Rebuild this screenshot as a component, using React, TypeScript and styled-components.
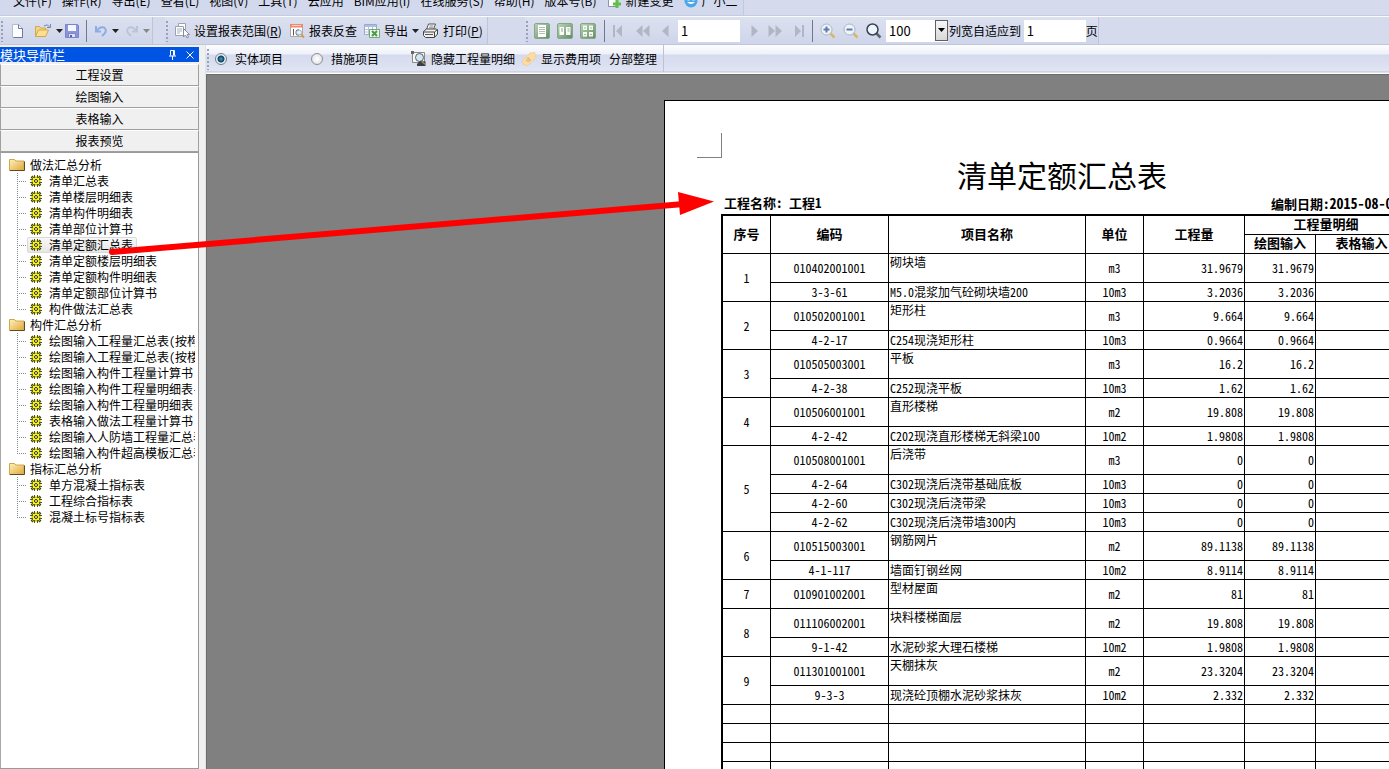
import React from "react";
import styled, { createGlobalStyle, css } from "styled-components";

const UI_FONT = '"Noto Sans CJK SC", "Liberation Sans", sans-serif';
const MONO_FONT = '"Noto Sans Mono CJK SC", "Noto Sans CJK SC", "Liberation Mono", monospace';

const GlobalStyle = createGlobalStyle`
  *, *::before, *::after { box-sizing: border-box; }
  body { margin: 0; overflow: hidden; background: #f0f0f0; font: 12px/16px ${UI_FONT}; color: #000; }
  button, input, select { font: inherit; color: inherit; margin: 0; padding: 0; border: 0; background: none; border-radius: 0; outline: 0; }
  ul { list-style: none; margin: 0; padding: 0; }
`;

const Window = styled.div`
  position: relative;
  display: flex;
  flex-direction: column;
  height: 100vh;
  overflow: hidden;
`;

const MenuBar = styled.nav`
  display: flex;
  flex: none;
  height: 30px;
  margin-top: -14px;
  background: #d5dbed;
  border-bottom: 1px solid #c6cbe0;
`;

const MenuGroup = styled.div`
  display: flex;
  align-items: center;
  gap: 10px;
  padding: 0 5px 0 13px;
  background: #d3d9ed;
  border-right: 1px solid #c3c9dd;
`;

const MenuItem = styled.button`
  display: flex;
  align-items: center;
  gap: 4px;
  white-space: nowrap;
`;

const ToolBar = styled.div`
  display: flex;
  flex: none;
  height: 29px;
  background: #d5dbed;
  border-top: 1px solid #fafbff;
  border-bottom: 1px solid #c1c6d6;
`;

const ToolGroup = styled.div<{ $gapAfter?: number }>`
  display: flex;
  align-items: center;
  background: linear-gradient(#dce1f0, #cfd5ea);
  border-right: 1px solid #bfc5d8;
  margin-right: ${(p) => p.$gapAfter ?? 0}px;
`;

const Grip = styled.span`
  flex: none;
  width: 9px;
  height: 22px;
  background: radial-gradient(circle at 2px 2px, #98a0ba 1px, transparent 1px) 0 0 / 9px 4px repeat-y;
`;

const ToolButton = styled.button<{ $width?: number; $center?: boolean }>`
  display: flex;
  flex: none;
  align-items: center;
  justify-content: ${(p) => (p.$center ? "center" : "flex-start")};
  gap: 4px;
  height: 22px;
  width: ${(p) => (p.$width ? `${p.$width}px` : "auto")};
  white-space: nowrap;
`;

const ToolLabel = styled.label`
  white-space: nowrap;
`;

const Separator = styled.span`
  flex: none;
  width: 1px;
  height: 22px;
  margin-right: 7px;
  background: #6f7890;
`;

const PageInput = styled.input`
  width: 62px;
  height: 22px;
  padding-left: 3px;
  background: #fff;
  font-size: 13px;
`;

const Combo = styled.span`
  display: grid;
  width: 62px;
  height: 22px;
  margin: 0 1px 0 4px;
  background: #fff;
  > * { grid-area: 1 / 1; }
`;

const ComboSelect = styled.select`
  appearance: none;
  width: 100%;
  padding-left: 3px;
  font-size: 13px;
`;

const ComboArrow = styled.span`
  display: grid;
  place-items: center;
  justify-self: end;
  width: 13px;
  height: 21px;
  border: 1px solid #606060;
  background: linear-gradient(#f6f6f6, #d8d8d8);
  pointer-events: none;
`;

const Body = styled.div`
  display: flex;
  flex: 1;
  min-height: 0;
`;

const Sidebar = styled.aside`
  display: flex;
  flex: none;
  flex-direction: column;
  width: 199px;
  padding-top: 2px;
`;

const PanelTitle = styled.header`
  display: flex;
  align-items: center;
  height: 15px;
  margin-bottom: 2px;
  background: #0054e3;
  color: #fff;
  font-size: 13px;
  line-height: 15px;
  > h2 { flex: 1; margin: 0; font: inherit; }
`;

const TitleButton = styled.button`
  display: grid;
  place-items: center;
  width: 18px;
  height: 15px;
`;

const NavButton = styled.button`
  height: 22px;
  border: 1px solid #a0a0a0;
  border-top-color: #fff;
  background: #f0f0f0;
  text-align: center;
`;

const Tree = styled.div`
  flex: 1;
  min-height: 0;
  padding: 4px 3px 0 0;
  overflow: hidden;
  border: 1px solid #9a9a9a;
  border-left-color: #a8a8a8;
  background: #fff;
  font-family: ${MONO_FONT};
`;

const TreeClip = styled.ul`
  overflow: hidden;
`;

const FolderButton = styled.button`
  display: flex;
  align-items: center;
  gap: 5px;
  height: 16px;
  padding-left: 8px;
  white-space: nowrap;
`;

const Leaf = styled.li`
  display: flex;
  height: 16px;
  padding-left: 16px;
`;

const Connector = styled.span<{ $last: boolean }>`
  flex: none;
  width: 10px;
  background:
    repeating-linear-gradient(#8a8a8a 0 1px, transparent 1px 2px) 0 0 / 1px ${(p) => (p.$last ? "50%" : "100%")} no-repeat,
    repeating-linear-gradient(90deg, #8a8a8a 0 1px, transparent 1px 2px) 0 8px / 10px 1px no-repeat;
`;

const LeafButton = styled.button<{ $active: boolean }>`
  display: flex;
  flex: none;
  align-items: center;
  gap: 7px;
  height: 16px;
  padding: 0 3px 0 2px;
  border: 1px solid transparent;
  border-radius: 2px;
  line-height: 14px;
  white-space: nowrap;
  ${(p) => p.$active && css`
    border-color: #d9d9d9;
    background: linear-gradient(#f8f8f8, #e6e6e6);
  `}
`;

const Splitter = styled.div`
  flex: none;
  width: 7px;
  background: #f0f0f0;
  border-right: 1px solid #e0e2ea;
`;

const Main = styled.main`
  display: flex;
  flex: 1;
  flex-direction: column;
  min-width: 0;
`;

const OptionBar = styled.div`
  display: flex;
  flex: none;
  height: 29px;
  padding-bottom: 1px;
  background: linear-gradient(#fcfdff 0, #eef1f9 9px, #d5daed 10px, #e0e4f3 26px, #c0c4d0 27px, #fff 28px);
`;

const OptionGroup = styled.div`
  display: flex;
  align-items: center;
  height: 27px;
  padding-right: 6px;
  border-right: 1px solid #bcc2d4;
`;

const RadioLabel = styled.label<{ $width: number }>`
  display: flex;
  align-items: center;
  gap: 8px;
  width: ${(p) => p.$width}px;
  white-space: nowrap;
`;

const Radio = styled.input`
  appearance: none;
  width: 12px;
  height: 12px;
  border: 1px solid #8a8f98;
  border-radius: 50%;
  background: radial-gradient(circle, #fff 0, #dfe1e6 6px);
  &:checked {
    border-color: #6b7f8e;
    background: radial-gradient(circle, #2b86ae 0 1px, #123c5a 3px, #eef3f6 4px);
  }
`;

const Viewer = styled.section`
  flex: 1;
  min-height: 0;
  padding: 25px 0 0 457px;
  overflow: hidden;
  border-left: 1px solid #6c6c6c;
  border-top: 1px solid #6c6c6c;
  background: #808080;
`;

const Sheet = styled.article`
  width: 797px;
  min-height: 1000px;
  padding: 32px 53px 0 56px;
  border: 1px solid #000;
  background: #fff;
  font-family: ${MONO_FONT};
`;

const CropMark = styled.div`
  width: 25px;
  height: 25px;
  margin-left: -24px;
  border: solid #808080;
  border-width: 0 1px 1px 0;
`;

const ReportTitle = styled.h1`
  margin: 0 0 4px;
  padding-right: 4px;
  font-size: 30px;
  font-weight: 300;
  line-height: 32px;
  text-align: center;
`;

const ReportInfo = styled.div`
  display: flex;
  justify-content: space-between;
  padding: 0 0 1px 3px;
  font-size: 13px;
  font-weight: 700;
  line-height: 18px;
  white-space: nowrap;
`;

const ReportDate = styled.span`
  width: 136px;
`;

const DateValue = styled.time`
  font-size: 14px;
`;

const Table = styled.table`
  width: 100%;
  table-layout: fixed;
  border: solid #000;
  border-width: 2px 0 0 2px;
  border-spacing: 0;
`;

const HeadCell = styled.th`
  height: 19px;
  padding: 0 0 2px;
  border: solid #000;
  border-width: 0 1px 1px 0;
  font-size: 13px;
  line-height: 16px;
`;

const Cell = styled.td<{ $align?: string; $top?: boolean; $tall?: boolean }>`
  height: ${(p) => (p.$tall ? 29 : 19)}px;
  padding: 0 1px;
  border: solid #000;
  border-width: 0 1px 1px 0;
  line-height: 16px;
  text-align: ${(p) => p.$align ?? "center"};
  vertical-align: ${(p) => (p.$top ? "top" : "middle")};
  white-space: nowrap;
`;

const ArrowOverlay = styled.svg`
  position: absolute;
  left: 0;
  top: 0;
  pointer-events: none;
`;

/* ---------- icons ---------- */

const Caret = ({ color = "#222" }: { color?: string }) => (
  <svg width="7" height="4" viewBox="0 0 7 4"><path d="M0 0h7L3.500 4z" fill={color} /></svg>
);

const NewIcon = () => (
  <svg width="16" height="16" viewBox="0 0 16 16">
    <path d="M3.500 1.500h6l4 4v9h-10z" fill="#fdfdff" stroke="#b4bdd0" />
    <path d="M9.500 1.500v4h4v9h-9" fill="none" stroke="#6c7a98" />
  </svg>
);

const OpenIcon = () => (
  <svg width="18" height="16" viewBox="0 0 18 16">
    <path d="M1.500 13.500v-10h4l1 1.500h5v3" fill="#f5d67e" stroke="#d0a850" />
    <path d="M1.500 13.500l3-6.500h10l-3 6.500z" fill="#ffe08a" stroke="#d0a850" />
    <path d="M10 3q3-2.500 5.500.5M16.500 1v3.500h-3.500" fill="none" stroke="#6f87b8" />
  </svg>
);

const SaveIcon = () => (
  <svg width="16" height="16" viewBox="0 0 16 16">
    <path d="M1.500 1.500h12l1 1v12h-13z" fill="#8d95da" stroke="#7a83cc" />
    <path d="M4 2h8v6H4z" fill="#f4f6ff" />
    <path d="M4.500 10.500h7v4h-7z" fill="#dfe3f8" stroke="#7a83cc" />
    <path d="M6 12h2v2H6z" fill="#5560a8" />
  </svg>
);

const UndoIcon = ({ color, flip }: { color: string; flip?: boolean }) => (
  <svg width="14" height="14" viewBox="0 0 14 14">
    <g transform={flip ? "translate(14 0) scale(-1 1)" : undefined} fill="none" stroke={color}>
      <path d="M2 2v5.500h5" strokeWidth="2" />
      <path d="M2.500 7Q6 2 10 3.500 13.500 6 10.500 9.500L8 12" strokeWidth="2" />
    </g>
  </svg>
);

const RangeIcon = () => (
  <svg width="16" height="16" viewBox="0 0 16 16">
    <path d="M4.500.500h7v10h-7z" fill="#fff" stroke="#9aa2b2" />
    <path d="M1.500 3.500h8v9h-8z" fill="#fff" stroke="#9aa2b2" />
    <path d="M3 6h5M3 8h5M3 10h3" stroke="#a6aebe" />
    <path d="M9.500 5.500v8.500l2-2 1.500 3 1.500-.7-1.300-2.800h2.300z" fill="#fff" stroke="#858d9d" />
  </svg>
);

const CheckIcon = () => (
  <svg width="16" height="16" viewBox="0 0 16 16">
    <path d="M1.500 2.500h12v11h-12z" fill="#fff" stroke="#b0a8a4" />
    <path d="M1 1h13v3.500H1z" fill="#f0886a" />
    <path d="M3 2.500h9" stroke="#fbd3c4" />
    <path d="M4.500 6.500v6M4 6.500h1" stroke="#555" />
    <path d="M10 7Q7 6 7 9.500T10 12" fill="none" stroke="#666" />
    <circle cx="10" cy="9.500" r="2.500" fill="#d5ebf5" fillOpacity=".7" stroke="#9ab0c0" />
    <path d="M12 11.500l3 3" stroke="#d39a4a" strokeWidth="2" />
  </svg>
);

const ExportIcon = () => (
  <svg width="16" height="16" viewBox="0 0 16 16">
    <path d="M.500 1.500h12v10H.500z" fill="#fff" stroke="#9aa9c8" />
    <path d="M1 2h11v2H1z" fill="#a9bfe6" />
    <path d="M1 6.500h11M1 9h11M4.500 4v7M8.500 4v7" stroke="#b4c2dc" />
    <path d="M5.500 6.500h10v8h-10z" fill="#eef8ec" stroke="#74a870" />
    <path d="M8 8l5 5M13 8l-5 5" stroke="#4a9a4a" strokeWidth="2" />
  </svg>
);

const PrintIcon = () => (
  <svg width="17" height="16" viewBox="0 0 17 16">
    <path d="M4.500 6.500l2-5.500h7l-2 5.500z" fill="#fff" stroke="#555" />
    <path d="M7.500 3h4M7 4.800h4" stroke="#888" />
    <path d="M1.500 8.500l3-2.500h10l1 1v4l-3 3.500h-9l-2-2z" fill="#f0f0f0" stroke="#444" />
    <path d="M1.500 9h11l3-2.500M12.500 9v5" fill="none" stroke="#444" />
    <path d="M3 11.500h8" stroke="#555" />
  </svg>
);

const PagesIcon = ({ kind }: { kind: 1 | 2 | 4 }) => (
  <svg width="16" height="16" viewBox="0 0 16 16">
    <defs>
      <linearGradient id={`pg${kind}`} x1="0" y1="0" x2="1" y2="1">
        <stop offset="0" stopColor="#bcd6b8" /><stop offset="1" stopColor="#5e8c60" />
      </linearGradient>
    </defs>
    <rect x=".500" y=".500" width="15" height="15" rx="1.500" fill={`url(#pg${kind})`} stroke="#86a686" />
    {kind === 1 && <><path d="M4 2h8v12H4z" fill="#fff" /><path d="M5 4.500h6M5 6.500h6M5 8.500h6M5 10.500h6" stroke="#b4c0b4" /></>}
    {kind === 2 && <><path d="M2.500 4H7v8H2.500zM9 4h4.500v8H9z" fill="#fff" /><path d="M4 6h2M4 8h2M10.500 6h2M10.500 8h2" stroke="#8fa58f" /></>}
    {kind === 4 && <><path d="M3 2.500h4v4.500H3zM9 2.500h4v4.500H9zM3 9h4v4.500H3zM9 9h4v4.500H9z" fill="#f4faf2" /><path d="M4 5h2M10 5h2M4 11.500h2M10 11.500h2" stroke="#a0b8a0" /></>}
  </svg>
);

const playShapes = {
  first: { w: 11, d: "M1 0h2v12H1zM10 0v12L4 6z" },
  rewind: { w: 14, d: "M6.500 0v12L0 6zM13.500 0v12L7 6z" },
  prev: { w: 7, d: "M6.500 0v12L0 6z" },
  next: { w: 7, d: "M.500 0v12L7 6z" },
  forward: { w: 14, d: "M.500 0v12L7 6zM7.500 0v12L14 6z" },
  last: { w: 11, d: "M1 0v12l6-6zM8 0h2v12H8z" },
};

const PlayIcon = ({ shape }: { shape: keyof typeof playShapes }) => (
  <svg width={playShapes[shape].w} height="12" viewBox={`0 0 ${playShapes[shape].w} 12`}>
    <path d={playShapes[shape].d} fill="#b2b6c4" />
  </svg>
);

const LensIcon = ({ sign, dark }: { sign?: "+" | "-"; dark?: boolean }) => (
  <svg width="16" height="16" viewBox="0 0 16 16">
    <path d="M10 10l4.500 4.500" stroke={dark ? "#5c636c" : "#d8b868"} strokeWidth="2.500" />
    <circle cx="6.500" cy="6.500" r="5.500" fill="#edf5fb" stroke={dark ? "#39424e" : "#aab2c0"} strokeWidth={dark ? 1.5 : 1} />
    {sign && <path d="M3.500 6.500h6" stroke="#5f7aa8" strokeWidth="2" />}
    {sign === "+" && <path d="M6.500 3.500v6" stroke="#5f7aa8" strokeWidth="2" />}
  </svg>
);

const HideDetailIcon = () => (
  <svg width="16" height="16" viewBox="0 0 16 16">
    <path d="M1.500 1.500h12v10h-12z" fill="#f6f6f2" stroke="#8a8a8a" />
    <path d="M0 0h3v3H0z" fill="#666" />
    <circle cx="8.500" cy="6.500" r="4" fill="#d6e6ee" stroke="#56626c" />
    <path d="M9 10l5.500 .5v4.500H6v-2z" fill="#3a4046" />
    <path d="M10.500 10.500l4 3" stroke="#a88a5a" strokeWidth="1.500" />
  </svg>
);

const FeeIcon = () => (
  <svg width="16" height="16" viewBox="0 0 16 16">
    <path d="M1 10L9.500 1.500l1.500 1L13 1l2 2.500-1 2 1 1L6 15l-1.500-1.500-2 .5z" fill="#f8dcaa" stroke="#f3cf90" />
    <path d="M6 7.500q2-1.500 2 .5t2 1M5.500 8.500q0 2.500 3 1.500" fill="none" stroke="#d9a862" />
  </svg>
);

const FolderIcon = () => (
  <svg width="16" height="14" viewBox="0 0 16 14">
    <defs>
      <linearGradient id="folder" x1="0" y1="0" x2="1" y2="1">
        <stop offset="0" stopColor="#fff2b8" /><stop offset="1" stopColor="#e0a63a" />
      </linearGradient>
    </defs>
    <path d="M.500 12.500v-11h5l1.500 1.500h8v9.500z" fill="url(#folder)" stroke="#cfa650" />
    <path d="M1 12.500h14.500v-9" fill="none" stroke="#5e4a20" />
  </svg>
);

const GearIcon = () => (
  <svg width="12" height="12" viewBox="0 0 12 12">
    <path d="M4.500 0v12M7.500 0v12M0 4.500h12M0 7.500h12" stroke="#55550a" />
    <path d="M1.500 1.500l9 9M10.500 1.500l-9 9" stroke="#45450a" strokeWidth="2.500" />
    <circle cx="6" cy="6" r="4" fill="#f2ee18" stroke="#5a5a0c" />
    <path d="M6 1v10M1 6h10M2.500 2.500l7 7M9.500 2.500l-7 7" stroke="#fffb20" />
    <circle cx="6" cy="6" r="1.500" fill="#ffffc0" stroke="#2c2c06" />
  </svg>
);

const PinIcon = () => (
  <svg width="9" height="10" viewBox="0 0 9 10">
    <path d="M2.500 5.500v-5h4v5M1 6h7M4.500 6v4M5.500 1v4.500" fill="none" stroke="#fff" />
  </svg>
);

const CloseIcon = () => (
  <svg width="8" height="8" viewBox="0 0 8 8"><path d="M.500.500l7 7M7.500.500l-7 7" stroke="#fff" /></svg>
);

const NewChangeIcon = () => (
  <svg width="15" height="16" viewBox="0 0 15 16">
    <path d="M1.500 1.500h9v12h-9z" fill="#fff" stroke="#8a94a8" />
    <path d="M10 7v8M6 11h8" stroke="#5fbf48" strokeWidth="3" />
  </svg>
);

const AssistantIcon = () => (
  <svg width="14" height="16" viewBox="0 0 14 16">
    <circle cx="7" cy="8" r="6.500" fill="#4aa7ea" />
    <path d="M3 9q4 4 8 0" fill="#fff" />
    <circle cx="4.500" cy="6" r="1.500" fill="#fff" /><circle cx="9.500" cy="6" r="1.500" fill="#fff" />
  </svg>
);

/* ---------- data ---------- */

const menus = ["文件(F)", "操作(R)", "导出(E)", "查看(L)", "视图(V)", "工具(T)", "云应用", "BIM应用(I)", "在线服务(S)", "帮助(H)", "版本号(B)"];

const navButtons = ["工程设置", "绘图输入", "表格输入", "报表预览"];

const tree = [
  {
    title: "做法汇总分析",
    items: ["清单汇总表", "清单楼层明细表", "清单构件明细表", "清单部位计算书", "清单定额汇总表", "清单定额楼层明细表", "清单定额构件明细表", "清单定额部位计算书", "构件做法汇总表"],
  },
  {
    title: "构件汇总分析",
    items: ["绘图输入工程量汇总表(按构件)", "绘图输入工程量汇总表(按楼层)", "绘图输入构件工程量计算书", "绘图输入构件工程量明细表-", "绘图输入构件工程量明细表.", "表格输入做法工程量计算书", "绘图输入人防墙工程量汇总表", "绘图输入构件超高模板汇总表"],
  },
  { title: "指标汇总分析", items: ["单方混凝土指标表", "工程综合指标表", "混凝土标号指标表"] },
];

type Line = [code: string, name: string, unit: string, qty: string];

const groups: Line[][] = [
  [["010402001001", "砌块墙", "m3", "31.9679"], ["3-3-61", "M5.0混浆加气砼砌块墙200", "10m3", "3.2036"]],
  [["010502001001", "矩形柱", "m3", "9.664"], ["4-2-17", "C254现浇矩形柱", "10m3", "0.9664"]],
  [["010505003001", "平板", "m3", "16.2"], ["4-2-38", "C252现浇平板", "10m3", "1.62"]],
  [["010506001001", "直形楼梯", "m2", "19.808"], ["4-2-42", "C202现浇直形楼梯无斜梁100", "10m2", "1.9808"]],
  [["010508001001", "后浇带", "m3", "0"], ["4-2-64", "C302现浇后浇带基础底板", "10m3", "0"], ["4-2-60", "C302现浇后浇带梁", "10m3", "0"], ["4-2-62", "C302现浇后浇带墙300内", "10m3", "0"]],
  [["010515003001", "钢筋网片", "m2", "89.1138"], ["4-1-117", "墙面钉钢丝网", "10m2", "8.9114"]],
  [["010901002001", "型材屋面", "m2", "81"]],
  [["011106002001", "块料楼梯面层", "m2", "19.808"], ["9-1-42", "水泥砂浆大理石楼梯", "10m2", "1.9808"]],
  [["011301001001", "天棚抹灰", "m2", "23.3204"], ["9-3-3", "现浇砼顶棚水泥砂浆抹灰", "10m2", "2.332"]],
];

const columnWidths = [48, 118, 197, 58, 101, 71, 92];
const blankRows = [0, 1, 2, 3, 4, 5];

/* ---------- sections ---------- */

const Report = () => (
  <Sheet>
    <CropMark />
    <ReportTitle>清单定额汇总表</ReportTitle>
    <ReportInfo>
      <span>工程名称: 工程1</span>
      <ReportDate>编制日期:<DateValue>2015-08-06</DateValue></ReportDate>
    </ReportInfo>
    <Table>
      <colgroup>{columnWidths.map((w, i) => <col key={i} width={w} />)}</colgroup>
      <thead>
        <tr>
          {["序号", "编码", "项目名称", "单位", "工程量"].map((h) => <HeadCell key={h} rowSpan={2}>{h}</HeadCell>)}
          <HeadCell colSpan={2}>工程量明细</HeadCell>
        </tr>
        <tr><HeadCell>绘图输入</HeadCell><HeadCell>表格输入</HeadCell></tr>
      </thead>
      <tbody>
        {groups.map((lines, g) => lines.map(([code, name, unit, qty], i) => (
          <tr key={code}>
            {i === 0 && <Cell rowSpan={lines.length}>{g + 1}</Cell>}
            <Cell $tall={i === 0}>{code}</Cell>
            <Cell $align="left" $top={i === 0}>{name}</Cell>
            <Cell>{unit}</Cell>
            <Cell $align="right">{qty}</Cell>
            <Cell $align="right">{qty}</Cell>
            <Cell />
          </tr>
        )))}
        {blankRows.map((r) => <tr key={r}>{columnWidths.map((_, i) => <Cell key={i} />)}</tr>)}
      </tbody>
    </Table>
  </Sheet>
);

const ModulePanel = () => (
  <Sidebar>
    <PanelTitle>
      <h2>模块导航栏</h2>
      <TitleButton aria-label="固定"><PinIcon /></TitleButton>
      <TitleButton aria-label="关闭"><CloseIcon /></TitleButton>
    </PanelTitle>
    {navButtons.map((n) => <NavButton key={n}>{n}</NavButton>)}
    <Tree>
      <TreeClip>
        {tree.map((folder) => (
          <li key={folder.title}>
            <FolderButton><FolderIcon />{folder.title}</FolderButton>
            <ul>
              {folder.items.map((item, i) => (
                <Leaf key={item}>
                  <Connector $last={i === folder.items.length - 1} />
                  <LeafButton $active={item === "清单定额汇总表"}><GearIcon />{item}</LeafButton>
                </Leaf>
              ))}
            </ul>
          </li>
        ))}
      </TreeClip>
    </Tree>
  </Sidebar>
);

export default function App() {
  return (
    <Window>
      <GlobalStyle />
      <MenuBar>
        <MenuGroup>
          {menus.map((m) => <MenuItem key={m}>{m}</MenuItem>)}
          <MenuItem><NewChangeIcon />新建变更</MenuItem>
          <MenuItem><AssistantIcon />广小二</MenuItem>
        </MenuGroup>
      </MenuBar>

      <ToolBar>
        <ToolGroup $gapAfter={12}>
          <Grip />
          <ToolButton $width={25} aria-label="新建"><NewIcon /></ToolButton>
          <ToolButton $width={30} aria-label="打开"><OpenIcon /><Caret /></ToolButton>
          <ToolButton $width={22} aria-label="保存"><SaveIcon /></ToolButton>
          <Separator />
          <ToolButton $width={31} aria-label="撤销"><UndoIcon color="#8fabe4" /><Caret /></ToolButton>
          <ToolButton $width={27} aria-label="重做"><UndoIcon color="#bcc5d6" flip /><Caret color="#888" /></ToolButton>
        </ToolGroup>
        <ToolGroup $gapAfter={37}>
          <Grip />
          <ToolButton $width={115}><RangeIcon /><span>设置报表范围(<u>R</u>)</span></ToolButton>
          <ToolButton $width={75}><CheckIcon />报表反查</ToolButton>
          <ToolButton $width={58}><ExportIcon />导出<Caret /></ToolButton>
          <ToolButton $width={65}><PrintIcon /><span>打印(<u>P</u>)</span></ToolButton>
        </ToolGroup>
        <ToolGroup>
          <Grip />
          <ToolButton $width={23} aria-label="单页"><PagesIcon kind={1} /></ToolButton>
          <ToolButton $width={23} aria-label="双页"><PagesIcon kind={2} /></ToolButton>
          <ToolButton $width={24} aria-label="四页"><PagesIcon kind={4} /></ToolButton>
          <Separator />
          <ToolButton $width={24} aria-label="首页"><PlayIcon shape="first" /></ToolButton>
          <ToolButton $width={26} aria-label="快退"><PlayIcon shape="rewind" /></ToolButton>
          <ToolButton $width={16} aria-label="上一页"><PlayIcon shape="prev" /></ToolButton>
          <PageInput aria-label="页码" defaultValue="1" />
          <ToolButton $width={28} $center aria-label="下一页"><PlayIcon shape="next" /></ToolButton>
          <ToolButton $width={26} aria-label="快进"><PlayIcon shape="forward" /></ToolButton>
          <ToolButton $width={18} aria-label="末页"><PlayIcon shape="last" /></ToolButton>
          <Separator />
          <ToolButton $width={23} aria-label="放大"><LensIcon sign="+" /></ToolButton>
          <ToolButton $width={23} aria-label="缩小"><LensIcon sign="-" /></ToolButton>
          <ToolButton $width={16} aria-label="查找"><LensIcon dark /></ToolButton>
          <Combo>
            <ComboSelect aria-label="缩放比例" defaultValue="100"><option>100</option><option>75</option></ComboSelect>
            <ComboArrow><Caret color="#000" /></ComboArrow>
          </Combo>
          <ToolLabel htmlFor="fit">列宽自适应到&nbsp;</ToolLabel>
          <PageInput id="fit" defaultValue="1" />
          <ToolLabel htmlFor="fit">页</ToolLabel>
        </ToolGroup>
      </ToolBar>

      <Body>
        <ModulePanel />
        <Splitter />
        <Main>
          <OptionBar>
            <OptionGroup>
              <Grip />
              <RadioLabel $width={96}><Radio type="radio" name="kind" defaultChecked />实体项目</RadioLabel>
              <RadioLabel $width={100}><Radio type="radio" name="kind" />措施项目</RadioLabel>
              <ToolButton $width={110}><HideDetailIcon />隐藏工程量明细</ToolButton>
              <ToolButton $width={88}><FeeIcon />显示费用项</ToolButton>
              <ToolButton>分部整理</ToolButton>
            </OptionGroup>
          </OptionBar>
          <Viewer><Report /></Viewer>
        </Main>
      </Body>

      <ArrowOverlay width="720" height="260" viewBox="0 0 720 260" aria-hidden="true">
        <path d="M112 252L684 204" stroke="#f00" strokeWidth="6" strokeLinecap="round" />
        <path d="M678 192L714 201.500L680 215z" fill="#f00" />
      </ArrowOverlay>
    </Window>
  );
}
